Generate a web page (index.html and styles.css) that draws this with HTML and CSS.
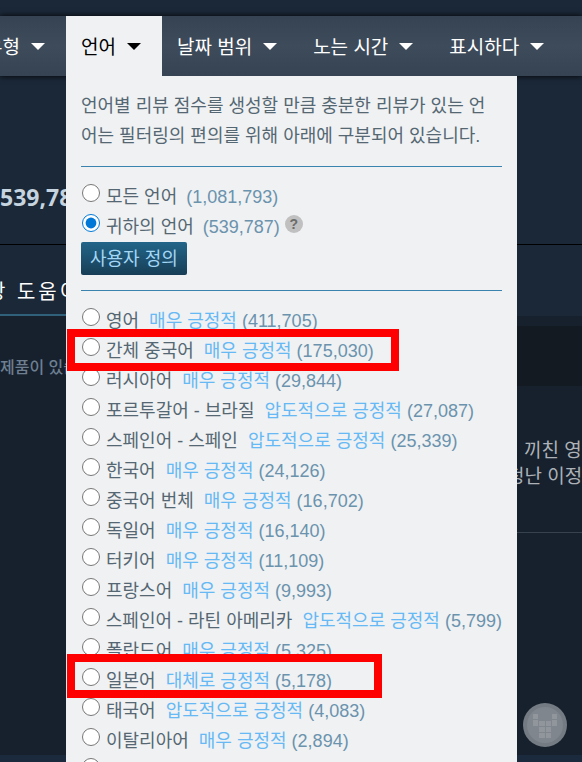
FILE: index.html
```
<!DOCTYPE html>
<html lang="ko">

<head>
  <meta charset="UTF-8">
  <title>고객 평가</title>
  <link rel="stylesheet" href="styles.css">
</head>

<body>
  <nav class="filters">
    <ul class="filter-list">
      <li><button class="filter" type="button">유형</button></li>
      <li><button class="filter active" type="button">언어</button>
        <form class="flyout">
          <p class="flyout-note">언어별 리뷰 점수를 생성할 만큼 충분한 리뷰가 있는 언어는 필터링의 편의를 위해 아래에 구분되어 있습니다.</p>

          <div class="group">
            <div class="option"><input type="radio" name="lang" id="all"><label for="all">모든 언어 <span class="count">(1,081,793)</span></label></div>
            <div class="option"><input type="radio" name="lang" id="mine" checked><label for="mine">귀하의 언어 <span class="count">(539,787)</span></label><span class="help">?</span></div>
            <button class="customize" type="button">사용자 정의</button>
          </div>

          <div class="group">
            <div class="option"><input type="radio" name="lang" id="en"><label for="en">영어 <span class="score">매우 긍정적</span> <span class="count">(411,705)</span></label></div>
            <div class="option marked marked-chinese"><input type="radio" name="lang" id="zh-cn"><label for="zh-cn">간체 중국어 <span class="score">매우 긍정적</span> <span class="count">(175,030)</span></label></div>
            <div class="option"><input type="radio" name="lang" id="ru"><label for="ru">러시아어 <span class="score">매우 긍정적</span> <span class="count">(29,844)</span></label></div>
            <div class="option"><input type="radio" name="lang" id="pt-br"><label for="pt-br">포르투갈어 - 브라질 <span class="score">압도적으로 긍정적</span> <span class="count">(27,087)</span></label></div>
            <div class="option"><input type="radio" name="lang" id="es"><label for="es">스페인어 - 스페인 <span class="score">압도적으로 긍정적</span> <span class="count">(25,339)</span></label></div>
            <div class="option"><input type="radio" name="lang" id="ko"><label for="ko">한국어 <span class="score">매우 긍정적</span> <span class="count">(24,126)</span></label></div>
            <div class="option"><input type="radio" name="lang" id="zh-tw"><label for="zh-tw">중국어 번체 <span class="score">매우 긍정적</span> <span class="count">(16,702)</span></label></div>
            <div class="option"><input type="radio" name="lang" id="de"><label for="de">독일어 <span class="score">매우 긍정적</span> <span class="count">(16,140)</span></label></div>
            <div class="option"><input type="radio" name="lang" id="tr"><label for="tr">터키어 <span class="score">매우 긍정적</span> <span class="count">(11,109)</span></label></div>
            <div class="option"><input type="radio" name="lang" id="fr"><label for="fr">프랑스어 <span class="score">매우 긍정적</span> <span class="count">(9,993)</span></label></div>
            <div class="option"><input type="radio" name="lang" id="es-la"><label for="es-la">스페인어 - 라틴 아메리카 <span class="score">압도적으로 긍정적</span> <span class="count">(5,799)</span></label></div>
            <div class="option"><input type="radio" name="lang" id="pl"><label for="pl">폴란드어 <span class="score">매우 긍정적</span> <span class="count">(5,325)</span></label></div>
            <div class="option marked marked-japanese"><input type="radio" name="lang" id="ja"><label for="ja">일본어 <span class="score">대체로 긍정적</span> <span class="count">(5,178)</span></label></div>
            <div class="option"><input type="radio" name="lang" id="th"><label for="th">태국어 <span class="score">압도적으로 긍정적</span> <span class="count">(4,083)</span></label></div>
            <div class="option"><input type="radio" name="lang" id="it"><label for="it">이탈리아어 <span class="score">매우 긍정적</span> <span class="count">(2,894)</span></label></div>
            <div class="option"><input type="radio" name="lang" id="other" aria-label="기타"></div>
          </div>
        </form>
      </li>
      <li><button class="filter" type="button">날짜 범위</button></li>
      <li><button class="filter" type="button">노는 시간</button></li>
      <li><button class="filter" type="button">표시하다</button></li>
    </ul>
  </nav>

  <section class="summary">
    <strong>539,787</strong>
  </section>

  <header class="review-head">
    <h2>장 도움이</h2>
  </header>

  <main class="reviews">
    <aside class="author">제품이 있습</aside>
    <article class="review">
      <div class="review-title"></div>
      <p class="review-text">끼친 영<br>청난 이정</p>
    </article>
  </main>
  <footer class="page-end"></footer>

  <svg class="watermark" viewBox="0 0 46 46" aria-hidden="true">
    <circle cx="23" cy="23" r="22" fill="#747b82"/>
    <circle cx="23" cy="23" r="18" fill="#80868d"/>
    <g fill="#91969d">
      <path d="M11 12h5v5h-5zM11 18h5v6h-5zM30 12h5v5h-5zM30 18h5v6h-5z"/>
      <path d="M17 19h6v5h-6zM24 19h5v5h-5zM17 25h6v5h-6zM24 25h5v5h-5zM17 31h6v5h-6zM24 31h5v5h-5z"/>
    </g>
  </svg>
</body>

</html>
```
FILE: styles.css
```
* {
  box-sizing: border-box;
}

html {
  height: 100%;
  overflow: hidden;
}

body {
  position: relative;
  display: flex;
  flex-direction: column;
  height: 100%;
  margin: 0;
  padding-top: 16px;
  overflow: hidden;
  background-color: #1b2838;
  color: #556772;
  font: 18px/30px "Liberation Sans", "Noto Sans CJK KR", sans-serif;
}

/* filter bar */

.filters {
  flex: none;
  background: linear-gradient(#364352, #3e4b5b 50%, #364352);
  box-shadow: 0 0 6px #000;
}

.filter-list {
  display: flex;
  margin: 0 0 0 -30px;
  padding: 0;
  list-style: none;
}

.filter-list li {
  position: relative;
}

.filter {
  display: flex;
  align-items: center;
  gap: 11px;
  height: 60px;
  padding: 3px 21px 0 15px;
  border: 0;
  background: none;
  color: #fff;
  font: inherit;
  font-size: 19px;
  white-space: nowrap;
}

.filter::after {
  content: "";
  margin-bottom: 3px;
  border: 7px solid transparent;
  border-top-color: currentColor;
  border-bottom: 0;
}

.filter.active {
  background-color: #eff1f3;
  color: #000;
}

/* language menu */

.flyout {
  position: absolute;
  top: 100%;
  left: 0;
  z-index: 1;
  width: 451px;
  padding: 15px 15px 14px;
  background-color: #eff1f3;
}

.flyout-note {
  margin: 0 0 15px;
  padding-right: 8px;
  word-break: break-all;
}

.group {
  padding: 15px 0;
  border-top: 1px solid #3a83ae;
}

.option {
  position: relative;
  display: flex;
  height: 30px;
  white-space: nowrap;
}

.option input {
  width: 18px;
  height: 18px;
  margin: 2px 6px 0 1px;
  accent-color: #0078d7;
}

.score {
  margin-left: 5px;
  color: #66b9f4;
}

.count {
  color: #6b93ad;
}

.group:first-of-type .count {
  margin-left: 4px;
}

.help {
  width: 18px;
  height: 18px;
  margin: 3px 0 0 5px;
  border-radius: 50%;
  background-color: #c0c0c0;
  color: #6c6c6c;
  font-size: 14px;
  font-weight: bold;
  line-height: 18px;
  text-align: center;
}

.customize {
  display: block;
  height: 33px;
  padding: 0 9px;
  border: 0;
  border-radius: 2px;
  background: linear-gradient(#236589, #173e56);
  color: #a4d7f5;
  font: inherit;
}

.marked::after {
  content: "";
  position: absolute;
  left: -14px;
  z-index: 1;
  box-sizing: border-box;
  border: 8px solid #f00;
}

.marked-chinese::after {
  top: -7px;
  bottom: -5px;
  width: 332px;
}

.marked-japanese::after {
  top: -12px;
  bottom: -2px;
  width: 315px;
}

/* page behind the menu */

.summary {
  flex: none;
  display: flex;
  align-items: flex-end;
  height: 169px;
  padding-bottom: 31px;
  border-bottom: 1px solid #000;
}

.summary strong {
  color: #c6d4df;
  font: bold 23px/32px "Noto Sans", sans-serif;
}

.review-head {
  flex: none;
  display: flex;
  align-items: center;
  height: 71px;
  overflow: hidden;
}

.review-head h2 {
  align-self: stretch;
  margin: 0 0 0 -13px;
  padding-top: 32px;
  border-bottom: 2px solid #2f617b;
  color: #fff;
  font-size: 20px;
  font-weight: normal;
  letter-spacing: 3px;
}

.reviews {
  flex: 1;
  display: flex;
  justify-content: space-between;
  overflow: hidden;
  background-color: #17212d;
}

.author {
  padding-top: 37px;
  color: #6d7f91;
  font-size: 16px;
  font-weight: 500;
}

.review {
  width: 75px;
  padding-top: 10px;
  white-space: nowrap;
}

.review-title {
  height: 60px;
  background-color: #131a22;
}

.review-text {
  height: 147px;
  margin: 0;
  padding-top: 52px;
  border-bottom: 1px solid #36424d;
  color: #acb2b8;
  font-size: 19px;
  line-height: 26px;
  text-indent: 17px;
}

.page-end {
  flex: none;
  height: 7px;
  background-color: #1b2a3c;
}

.watermark {
  position: absolute;
  right: 14px;
  bottom: 14px;
  width: 46px;
  height: 46px;
}
```
